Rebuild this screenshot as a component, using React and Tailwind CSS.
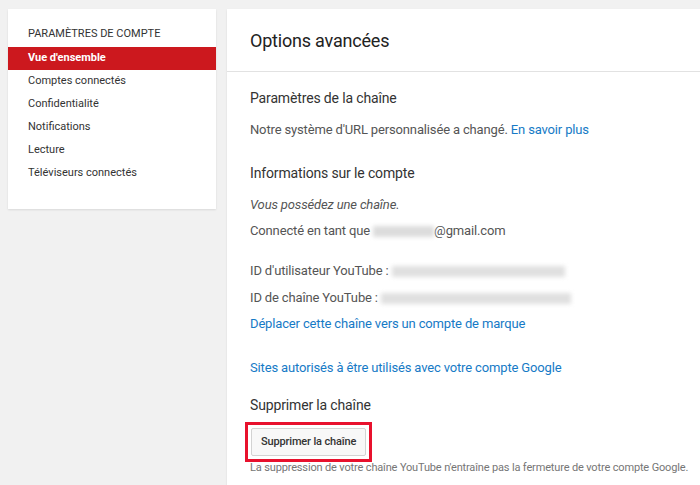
export default function App() {
  const items = [
    "Comptes connectés",
    "Confidentialité",
    "Notifications",
    "Lecture",
    "Téléviseurs connectés",
  ];

  return (
    <div className="min-h-[485px] bg-[#f1f1f1] font-['Roboto',sans-serif] flex items-start pt-[9px] pl-[8px] gap-[11px] overflow-hidden">
      {/* sidebar */}
      <div className="w-[208px] shrink-0 bg-white shadow-[0_1px_2px_rgba(0,0,0,0.1)] pt-[17px] pb-[24px]">
        <div className="px-[20px] text-[11px] leading-[16px] uppercase text-[#333]">
          Paramètres de compte
        </div>
        <div className="mt-[5px] h-[23px] bg-[#cc181e] px-[20px] flex items-center text-[11px] font-bold text-white">
          Vue d'ensemble
        </div>
        {items.map((it) => (
          <div
            key={it}
            className="h-[23px] px-[20px] flex items-center text-[11px] text-[#333]"
          >
            {it}
          </div>
        ))}
      </div>

      {/* main */}
      <div className="flex-1 bg-white shadow-[0_1px_2px_rgba(0,0,0,0.1)] min-h-[490px]">
        <div className="h-[63px] px-[23px] flex items-center border-b border-[#e2e2e2]">
          <h1 className="text-[18px] tracking-[-0.2px] text-[#222]">Options avancées</h1>
        </div>

        <div className="px-[23px] text-[13px] leading-[20px] tracking-[-0.15px] text-[#555]">
          <h2 className="mt-[16px] text-[14px] text-[#333]">Paramètres de la chaîne</h2>
          <p className="mt-[12px]">
            Notre système d'URL personnalisée a changé.{" "}
            <a className="text-[#167ac6]">En savoir plus</a>
          </p>

          <h2 className="mt-[23px] text-[14px] text-[#333]">Informations sur le compte</h2>
          <p className="mt-[12px] italic">Vous possédez une chaîne.</p>
          <p className="mt-[6px] flex items-center">
            Connecté en tant que&nbsp;
            <span className="inline-block w-[61px] h-[11px] bg-[#dcdcdc] blur-[2px]" />
            @gmail.com
          </p>

          <p className="mt-[20px] flex items-center">
            ID d'utilisateur YouTube :&nbsp;
            <span className="inline-block w-[173px] h-[11px] bg-[#e0e0e0] blur-[2px]" />
          </p>
          <p className="mt-[7px] flex items-center">
            ID de chaîne YouTube :&nbsp;
            <span className="inline-block w-[190px] h-[11px] bg-[#e0e0e0] blur-[2px]" />
          </p>
          <p className="mt-[6px]">
            <a className="text-[#167ac6]">Déplacer cette chaîne vers un compte de marque</a>
          </p>

          <p className="mt-[24px]">
            <a className="text-[#167ac6]">Sites autorisés à être utilisés avec votre compte Google</a>
          </p>

          <h2 className="mt-[17px] text-[14px] text-[#333]">Supprimer la chaîne</h2>
          <div className="mt-[7px] -ml-[5px] inline-block border-[3px] border-[#e8112d] p-[3px]">
            <button className="h-[28px] px-[9px] bg-[#f8f8f8] border border-[#d3d3d3] rounded-[2px] text-[11px] font-medium text-[#333]">
              Supprimer la chaîne
            </button>
          </div>
          <p className="mt-0 whitespace-nowrap text-[11px] leading-[12px] tracking-[-0.15px] text-[#767676]">
            La suppression de votre chaîne YouTube n'entraîne pas la fermeture de votre compte Google.
          </p>
        </div>
      </div>
    </div>
  );
}
